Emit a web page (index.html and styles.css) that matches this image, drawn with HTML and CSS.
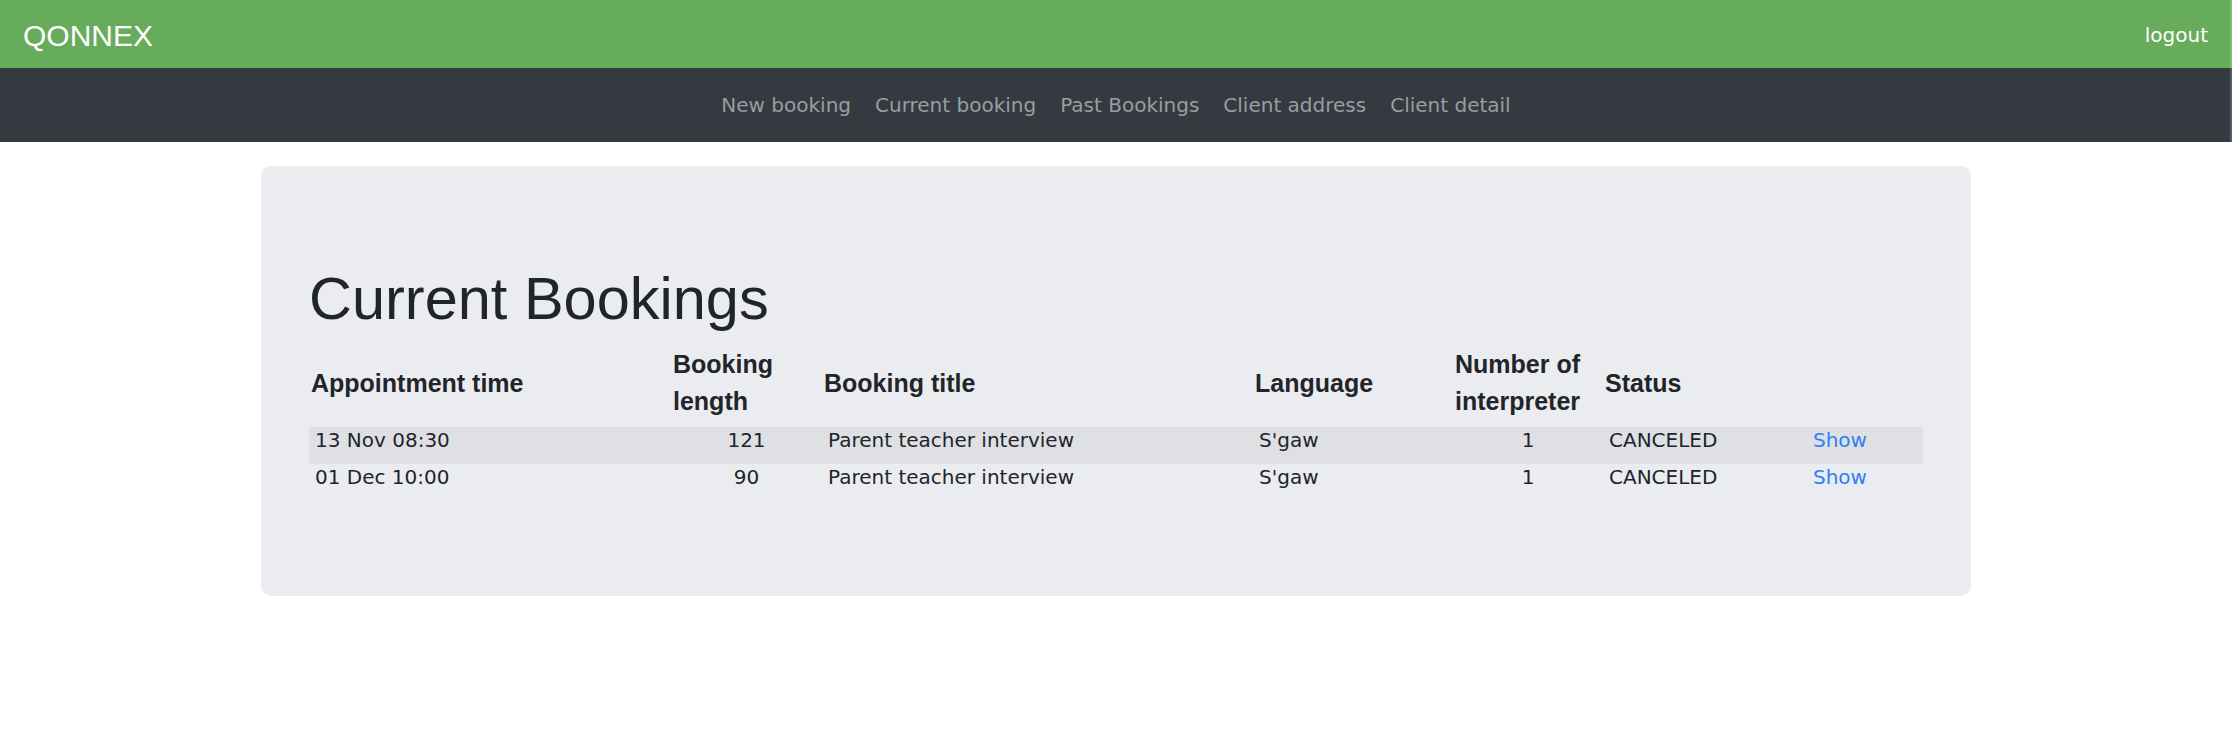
FILE: index.html
```html
<!DOCTYPE html>
<html lang="en">
<head>
<meta charset="utf-8">
<title>QONNEX - Current Bookings</title>
<link rel="stylesheet" href="styles.css">
</head>
<body>
<header class="topbar">
  <a class="brand" href="#">QONNEX</a>
  <a class="logout" href="#">logout</a>
</header>
<nav class="navbar">
  <a class="nav-link" href="#">New booking</a>
  <a class="nav-link" href="#">Current booking</a>
  <a class="nav-link" href="#">Past Bookings</a>
  <a class="nav-link" href="#">Client address</a>
  <a class="nav-link" href="#">Client detail</a>
</nav>
<main class="card">
  <h1 class="title">Current Bookings</h1>
  <table class="bookings">
    <colgroup>
      <col class="c-time">
      <col class="c-len">
      <col class="c-title">
      <col class="c-lang">
      <col class="c-num">
      <col class="c-status">
      <col class="c-show">
    </colgroup>
    <thead>
      <tr>
        <th>Appointment time</th>
        <th>Booking length</th>
        <th>Booking title</th>
        <th>Language</th>
        <th>Number of interpreter</th>
        <th>Status</th>
        <th></th>
      </tr>
    </thead>
    <tbody>
      <tr class="striped">
        <td>13 Nov 08:30</td>
        <td class="center">121</td>
        <td>Parent teacher interview</td>
        <td>S'gaw</td>
        <td class="center">1</td>
        <td>CANCELED</td>
        <td><a class="show" href="#">Show</a></td>
      </tr>
      <tr>
        <td>01 Dec 10:00</td>
        <td class="center">90</td>
        <td>Parent teacher interview</td>
        <td>S'gaw</td>
        <td class="center">1</td>
        <td>CANCELED</td>
        <td><a class="show" href="#">Show</a></td>
      </tr>
    </tbody>
  </table>
</main>
</body>
</html>
```

FILE: styles.css
```css
* { box-sizing: border-box; }

body {
  margin: 0;
  background: #ffffff;
  color: #212529;
  font-family: "DejaVu Sans", sans-serif;
  font-size: 20px;
}

a { text-decoration: none; }

.topbar {
  height: 68px;
  background: #67ac5b;
  display: flex;
  justify-content: space-between;
  align-items: center;
  padding: 0 24px 0 23px;
  box-shadow: inset -2px 0 0 rgba(255, 255, 255, 0.18);
}

.brand {
  color: #ffffff;
  font-family: "Liberation Sans", Arial, sans-serif;
  font-size: 30px;
  line-height: 45px;
  padding-top: 3px;
}

.logout {
  color: #ffffff;
  font-family: "DejaVu Sans", sans-serif;
  font-size: 20px;
  line-height: 30px;
  padding-top: 2px;
}

.navbar {
  height: 74px;
  background: #343a40;
  display: flex;
  justify-content: center;
  align-items: center;
  gap: 24px;
  box-shadow: inset -2px 0 0 rgba(255, 255, 255, 0.18);
}

.nav-link {
  color: #9a9da0;
  font-size: 20px;
  line-height: 30px;
}

.card {
  width: 1710px;
  margin: 24px auto 0;
  background: #ebecf0;
  border-radius: 10px;
  padding: 97px 48px 95px;
}

.title {
  margin: 0 0 4px;
  font-family: "Liberation Sans", Arial, sans-serif;
  font-weight: normal;
  font-size: 59.5px;
  line-height: 72px;
  color: #212529;
}

.bookings {
  width: 100%;
  table-layout: fixed;
  border-collapse: collapse;
}

.c-time { width: 362px; }
.c-len { width: 151px; }
.c-title { width: 431px; }
.c-lang { width: 200px; }
.c-num { width: 150px; }
.c-status { width: 204px; }
.c-show { width: 116px; }

.bookings th {
  font-family: "Liberation Sans", Arial, sans-serif;
  font-weight: bold;
  font-size: 25px;
  line-height: 37px;
  text-align: left;
  vertical-align: middle;
  padding: 7px 2px;
  color: #212529;
}

.bookings td {
  font-size: 20px;
  line-height: 24px;
  padding: 0.5px 6px 12.5px;
  vertical-align: top;
  color: #212529;
}

.bookings td.center { text-align: center; }

.striped { background: #dfe0e4; }

.show { color: #2f7ff6; }
```
